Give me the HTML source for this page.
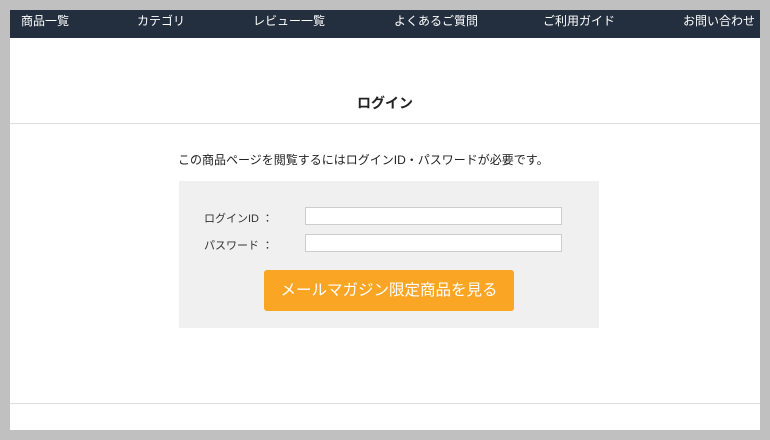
<!DOCTYPE html>
<html><head><meta charset="utf-8"><style>
*{margin:0;padding:0;box-sizing:border-box}
body{width:770px;height:440px;background:#c0c0c0;font-family:"Liberation Sans","Noto Sans CJK JP",sans-serif;position:relative;overflow:hidden}
.page{position:absolute;left:10px;top:10px;width:750px;height:420px;background:#fff}
.nav{position:absolute;left:0;top:0;width:750px;height:28px;background:#232f3e;color:#fff;font-size:12px}
.nav span{position:absolute;top:2px}
.title{position:absolute;left:0;width:750px;top:83px;text-align:center;font-size:14px;font-weight:bold;color:#222}
.hr{position:absolute;left:0;width:750px;height:1px;background:#ddd}
.msg{position:absolute;left:168px;top:141px;font-size:12px;color:#222}
.box{position:absolute;left:169px;top:171px;width:420px;height:147px;background:#f0f0f0}
.lbl{position:absolute;font-size:11px;color:#333;left:25px}
.inp{position:absolute;left:126px;width:257px;height:18px;background:#fff;border:1px solid #ccc}
.btn{position:absolute;left:85px;top:89px;width:250px;height:41px;background:#fba524;border-radius:3px;color:#fff;font-size:15.5px;text-align:center;line-height:41px}
</style></head><body><div class="page">
<div class="nav"><span style="left:11px">商品一覧</span><span style="left:127px">カテゴリ</span><span style="left:243px">レビュー一覧</span><span style="left:384px">よくあるご質問</span><span style="left:533px">ご利用ガイド</span><span style="left:673px">お問い合わせ</span></div>
<div class="title">ログイン</div>
<div class="hr" style="top:113px"></div>
<div class="msg">この商品ページを閲覧するにはログインID・パスワードが必要です。</div>
<div class="box">
<div class="lbl" style="top:29px">ログインID ：</div><div class="inp" style="top:26px"></div>
<div class="lbl" style="top:56px">パスワード ：</div><div class="inp" style="top:53px"></div>
<div class="btn">メールマガジン限定商品を見る</div>
</div>
<div class="hr" style="top:393px"></div>
</div></body></html>
